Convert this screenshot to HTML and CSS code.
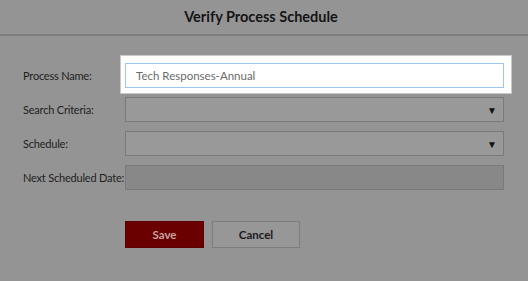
FILE: index.html
```html
<!DOCTYPE html>
<html lang="en">
  <head>
    <meta charset="UTF-8" />
    <meta name="viewport" content="width=device-width, initial-scale=1.0" />
    <title>Verify Process Schedule</title>
    <link rel="stylesheet" href="styles.css">
  </head>
  <body>
    <div class="modal">
      <div class="modal-header">
        <h1>Verify Process Schedule</h1>
      </div>

      <div class="modal-body">
        <div class="form-row">
          <label for="processName">Process Name:</label>
          <div class="highlight">
            <input type="text" id="processName" class="field field-active" value="Tech Responses-Annual" />
          </div>
        </div>

        <div class="form-row">
          <label>Search Criteria:</label>
          <div class="field select-field"><span class="arrow">&#9660;</span></div>
        </div>

        <div class="form-row">
          <label>Schedule:</label>
          <div class="field select-field"><span class="arrow">&#9660;</span></div>
        </div>

        <div class="form-row">
          <label>Next Scheduled Date:</label>
          <div class="field field-disabled"></div>
        </div>

        <div class="button-row">
          <button class="btn btn-save">Save</button>
          <button class="btn btn-cancel">Cancel</button>
        </div>
      </div>
    </div>
  </body>
</html>
```

FILE: styles.css
```css
body {
  margin: 0;
  background-color: #949494;
  font-family: Lato, "Liberation Sans", sans-serif;
  color: #1e1e1e;
}
.modal {
  width: 528px;
  height: 281px;
}
.modal-header {
  height: 34px;
  border-bottom: 2px solid #7e7e7e;
  display: flex;
  align-items: center;
  justify-content: center;
}
.modal-header h1 {
  margin: 0 0 2px -6px;
  font-size: 14.5px;
  font-weight: bold;
  color: #141414;
}
.modal-body {
  padding: 27px 0 0 23px;
}
.form-row {
  display: flex;
  align-items: center;
  height: 25px;
  margin-bottom: 9px;
}
.form-row label {
  flex-shrink: 0;
  width: 102px;
  white-space: nowrap;
  font-size: 11px;
  letter-spacing: -0.2px;
  color: #1f1f1f;
}
.highlight {
  margin: -7px -7px -5px -4px;
  padding: 7px 7px 5px 4px;
  background-color: #fff;
  box-shadow: 0 0 0 1px #c8c8c8;
}
.field {
  box-sizing: border-box;
  width: 379px;
  height: 25px;
  border: 1px solid #7a7a7a;
  background-color: #999;
}
.field-active {
  display: block;
  margin: 0;
  padding: 0 10px;
  border: 1px solid #9cc7f0;
  background-color: #fff;
  font-family: inherit;
  font-size: 11.5px;
  color: #6a6a6a;
  outline: none;
}
.select-field {
  display: flex;
  align-items: center;
  justify-content: flex-end;
  padding-right: 6px;
}
.arrow {
  font-size: 10px;
  color: #111;
}
.field-disabled {
  background-color: #888;
}
.button-row {
  display: flex;
  gap: 8px;
  margin: 31px 0 0 102px;
}
.btn {
  height: 27px;
  font-family: inherit;
  font-size: 11.5px;
  font-weight: bold;
  cursor: pointer;
}
.btn-save {
  width: 79px;
  border: 1px solid #5a0000;
  background-color: #6b0000;
  color: #c9a3a3;
}
.btn-cancel {
  width: 88px;
  border: 1px solid #7e7e7e;
  background-color: #979797;
  color: #1a1a1a;
}
```
